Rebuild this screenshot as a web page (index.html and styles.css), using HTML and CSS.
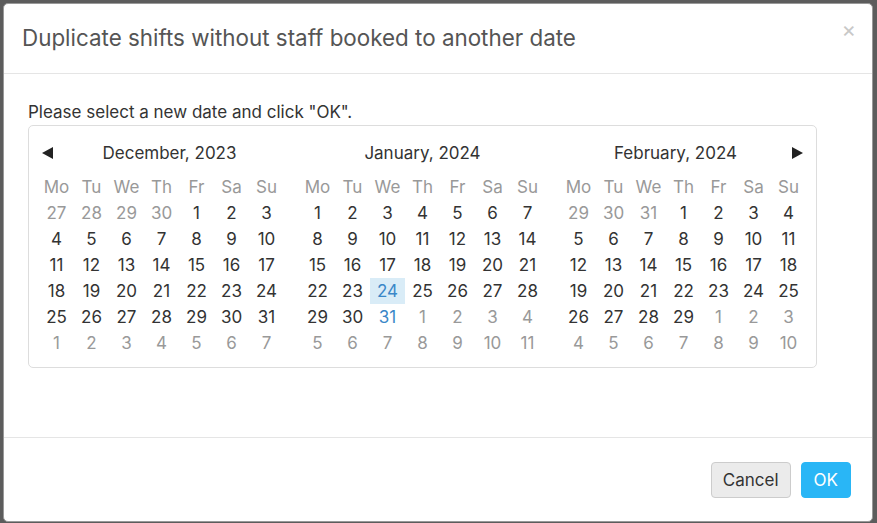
FILE: index.html
```html
<!DOCTYPE html>
<html lang="en">
<head>
    <meta charset="UTF-8">
    <title>Duplicate shifts</title>
    <link rel="stylesheet" href="styles.css">
</head>
<body>

    <div class="modal">
        <div class="modal-header">
            <h4>Duplicate shifts without staff booked to another date</h4>
            <span class="close">&times;</span>
        </div>

        <div class="modal-body">
            <p>Please select a new date and click "OK".</p>
            <div class="datepicker" id="datepicker"></div>
        </div>

        <div class="modal-footer">
            <button class="btn">Cancel</button>
            <button class="btn btn-primary">OK</button>
        </div>
    </div>

    <script src="script.js"></script>
</body>
</html>
```

FILE: script.js
```js
const months = [
    { name: "December, 2023", year: 2023, month: 11 },
    { name: "January, 2024", year: 2024, month: 0 },
    { name: "February, 2024", year: 2024, month: 1 }
];
const weekdays = ["Mo", "Tu", "We", "Th", "Fr", "Sa", "Su"];
const picker = document.getElementById("datepicker");

const arrowLeft = '<svg width="13" height="14" viewBox="0 0 13 14"><path d="M12 1 L1 7 L12 13 Z" fill="#222"/></svg>';
const arrowRight = '<svg width="13" height="14" viewBox="0 0 13 14"><path d="M1 1 L12 7 L1 13 Z" fill="#222"/></svg>';

months.forEach((m, i) => {
    const box = document.createElement("div");
    box.className = "month";

    const head = document.createElement("div");
    head.className = "month-head";
    if (i === 0) head.innerHTML += '<span class="arrow prev">' + arrowLeft + '</span>';
    head.innerHTML += '<span class="month-name">' + m.name + '</span>';
    if (i === months.length - 1) head.innerHTML += '<span class="arrow next">' + arrowRight + '</span>';
    box.appendChild(head);

    const grid = document.createElement("div");
    grid.className = "days";
    weekdays.forEach(w => {
        const c = document.createElement("span");
        c.className = "wd";
        c.textContent = w;
        grid.appendChild(c);
    });

    const first = new Date(m.year, m.month, 1);
    const offset = (first.getDay() + 6) % 7;
    const start = new Date(m.year, m.month, 1 - offset);
    for (let k = 0; k < 42; k++) {
        const d = new Date(start.getFullYear(), start.getMonth(), start.getDate() + k);
        const c = document.createElement("span");
        c.className = "day";
        c.textContent = d.getDate();
        if (d.getMonth() !== m.month) c.classList.add("other");
        if (d.getFullYear() === 2024 && d.getMonth() === 0 && d.getMonth() === m.month) {
            if (d.getDate() === 24) c.classList.add("selected");
            if (d.getDate() === 31) c.classList.add("today");
        }
        grid.appendChild(c);
    }
    box.appendChild(grid);
    picker.appendChild(box);
});
```

FILE: styles.css
```css
body {
    margin: 0;
    padding: 3px 4px 0 3px;
    background: #5c5c5c;
    font-family: Inter, "Noto Sans", sans-serif;
    color: #333;
    height: 520px;
    overflow: hidden;
}
.modal {
    width: 868px;
    height: 517px;
    background: #fff;
    border: 1px solid #999;
    border-radius: 5px;
    display: flex;
    flex-direction: column;
}
.modal-header {
    height: 69px;
    border-bottom: 1px solid #e5e5e5;
    display: flex;
    align-items: center;
    padding: 0 20px 0 18px;
    position: relative;
}
.modal-header h4 {
    margin: 0 0 2px 0;
    font-size: 22.4px;
    font-weight: normal;
    color: #555;
    flex: 1;
}
.close {
    position: absolute;
    right: 16px;
    top: 12px;
    font-size: 22px;
    color: #c8c8c8;
}
.modal-body {
    flex: 1;
    padding: 28px 24px 0 24px;
}
.modal-body p {
    margin: 0 0 3px 0;
    font-size: 17px;
    line-height: 20px;
    color: #333;
}
.datepicker {
    display: flex;
    gap: 16px;
    width: 767px;
    padding: 13px 10px 11px 10px;
    border: 1px solid #ddd;
    border-radius: 5px;
}
.month {
    width: 245px;
}
.month-head {
    height: 28px;
    display: flex;
    align-items: center;
    margin-bottom: 7px;
}
.month-name {
    flex: 1;
    text-align: center;
    font-size: 17px;
    color: #333;
}
.arrow {
    display: flex;
    width: 14px;
}
.arrow.prev {
    margin-left: 2px;
}
.arrow.next {
    justify-content: flex-end;
    margin-right: 2px;
}
.days {
    display: grid;
    grid-template-columns: repeat(7, 35px);
    grid-auto-rows: 26px;
}
.days span {
    display: flex;
    align-items: center;
    justify-content: center;
    font-size: 17px;
}
.wd {
    color: #999;
}
.day.other {
    color: #999;
}
.day.selected {
    background: #d9ecf7;
    color: #3a87c8;
}
.day.today {
    color: #3a87c8;
}
.modal-footer {
    height: 84px;
    border-top: 1px solid #e5e5e5;
    display: flex;
    justify-content: flex-end;
    align-items: flex-start;
    gap: 10px;
    padding: 24px 21px 0 0;
    box-sizing: border-box;
}
.btn {
    height: 36px;
    padding: 0 11px;
    font-family: Inter, "Noto Sans", sans-serif;
    font-size: 17px;
    border: 1px solid #ccc;
    background: #ebebeb;
    color: #333;
    border-radius: 4px;
}
.btn-primary {
    padding: 0 12px;
    background: #29b6f6;
    border-color: #29b6f6;
    color: #fff;
}
```
